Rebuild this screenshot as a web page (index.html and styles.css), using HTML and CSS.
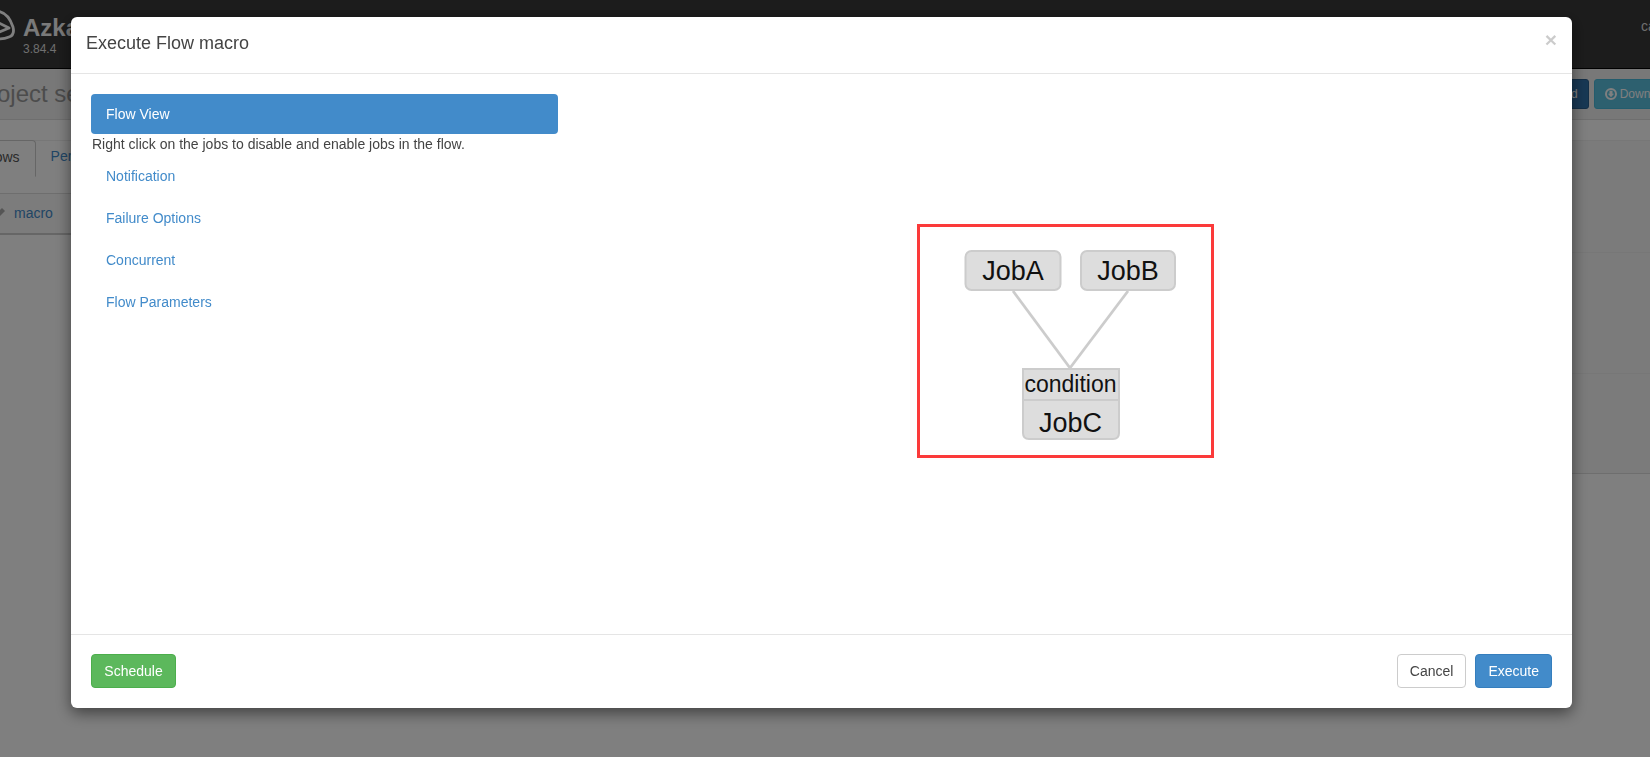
FILE: index.html
```html
<!DOCTYPE html>
<html lang="en">
<head>
<meta charset="utf-8">
<title>Azkaban - Execute Flow</title>
<link rel="stylesheet" href="styles.css">
</head>
<body>
<div class="page">
  <header class="navbar">
    <div class="brand">
      <svg class="logo" width="16" height="40" viewBox="0 0 16 40"><path d="M-5 10 Q8 10 13 26 Q15 34 9 36 Q2 39 -6 37 M-3 21 L9 27 L-3 32" fill="none" stroke="#fff" stroke-width="2.8" stroke-linejoin="round"/></svg>
      <div class="brand-text">
        <div class="brand-name">Azkaban</div>
        <div class="brand-version">3.84.4</div>
      </div>
    </div>
    <div class="user">carl</div>
  </header>
  <section class="page-head">
    <h1 class="project">Project settings</h1>
    <div class="head-actions">
      <a class="btn-sm btn-upload">Upload</a>
      <a class="btn-sm btn-download">
        <svg width="12" height="12" viewBox="0 0 12 12"><circle cx="6" cy="6" r="5" fill="none" stroke="#fff" stroke-width="2"/><path d="M4.5 2.8h3v3h1.6L6 9.3 2.9 5.8h1.6z" fill="#fff"/></svg>
        Download
      </a>
    </div>
  </section>
  <div class="sub-bar"></div>
  <div class="main">
    <div class="main-left">
      <nav class="tabs">
        <a class="tab tab-active">Flows</a>
        <a class="tab">Permissions</a>
        <span class="tabs-rest"></span>
      </nav>
      <div class="flow-row">
        <svg width="12" height="12" viewBox="0 0 12 12"><path d="M0 12l1-4 7-7 3 3-7 7z" fill="#aaa"/></svg>
        <a class="flow-link">macro</a>
      </div>
    </div>
    <aside class="main-right">
      <div class="side-block side-a"></div>
      <div class="side-block side-b"></div>
      <div class="side-block side-c"></div>
    </aside>
  </div>
</div>
<div class="backdrop"></div>
<div class="modal">
  <div class="modal-header">
    <button class="close">×</button>
    <h4 class="modal-title">Execute Flow macro</h4>
  </div>
  <div class="modal-body">
    <div class="sidebar">
      <a class="pill pill-active">Flow View</a>
      <p class="hint">Right click on the jobs to disable and enable jobs in the flow.</p>
      <a class="pill">Notification</a>
      <a class="pill">Failure Options</a>
      <a class="pill">Concurrent</a>
      <a class="pill">Flow Parameters</a>
    </div>
    <div class="graph-panel">
      <svg class="graph" width="297" height="234" viewBox="0 0 297 234">
        <rect class="frame" x="1.5" y="1.5" width="294" height="231"/>
        <line class="edge" x1="96" y1="67" x2="153" y2="144"/>
        <line class="edge" x1="211" y1="67" x2="153" y2="144"/>
        <rect class="node" x="48.500" y="27" width="95" height="39" rx="6"/>
        <rect class="node" x="164" y="27" width="94" height="39" rx="6"/>
        <path class="node" d="M106 145H202V209Q202 215 196 215H112Q106 215 106 209Z"/>
        <rect class="node" x="106" y="145" width="96" height="31"/>
        <text class="label" x="96" y="56">JobA</text>
        <text class="label" x="211" y="56">JobB</text>
        <text class="label label-small" x="153.500" y="168">condition</text>
        <text class="label" x="153.500" y="208">JobC</text>
      </svg>
    </div>
  </div>
  <div class="modal-footer">
    <button class="btn btn-success">Schedule</button>
    <div class="footer-right">
      <button class="btn btn-default">Cancel</button>
      <button class="btn btn-primary">Execute</button>
    </div>
  </div>
</div>
</body>
</html>
```

FILE: styles.css
```css
* { box-sizing: border-box; }
html, body { margin: 0; height: 100%; overflow: hidden; }
body { font-family: "Liberation Sans", Arial, sans-serif; font-size: 14px; line-height: 20px; color: #333; background: #fff; }

.page { height: 757px; overflow: hidden; display: flex; flex-direction: column; }
.navbar { height: 69px; flex: none; background: #393939; border-bottom: 1px solid #000; display: flex; justify-content: space-between; overflow: hidden; }
.brand { display: flex; align-items: flex-start; }
.logo { margin-top: 1px; margin-right: 7px; }
.brand-name { font-size: 24px; font-weight: bold; line-height: 30px; margin-top: 13px; color: #f4f4f4; }
.brand-version { font-size: 12px; line-height: 16px; margin-top: -2px; color: #ddd; }
.user { margin-top: 16px; margin-right: -16px; color: #ddd; font-size: 14px; width: 25px; }

.page-head { height: 51px; flex: none; background: #f0f0f0; border-bottom: 1px solid #ddd; display: flex; justify-content: space-between; overflow: hidden; padding-top: 10px; }
.project { margin: 0 0 0 -27px; font-size: 24px; font-weight: normal; line-height: 30px; color: #999; white-space: nowrap; }
.head-actions { display: flex; gap: 5px; margin-right: -34px; }
.btn-sm { display: flex; align-items: center; gap: 3px; height: 30px; padding: 0 10px; border-radius: 3px; font-size: 12px; color: #fff; }
.btn-upload { background: #3071a9; border: 1px solid #285e8e; }
.btn-download { background: #5bc0de; border: 1px solid #46b8da; }

.sub-bar { height: 21px; flex: none; background: #fff; border-bottom: 1px solid #eee; }
.main { flex: 1; display: flex; background: #fff; }
.main-left { width: 1000px; margin-top: -1px; }
.tabs { display: flex; height: 37px; }
.tab { padding: 6px 15px; color: #428bca; height: 37px; line-height: 20px; }
.tab-active { margin-left: -33px; padding-left: 15px; color: #555; background: #fff; border: 1px solid #ccc; border-bottom-color: #fff; border-radius: 4px 4px 0 0; }
.tabs-rest { flex: 1; border-bottom: 1px solid #ccc; }
.flow-row { margin-top: 16px; height: 42px; border-top: 1px solid #ddd; border-bottom: 2px solid #ccc; display: flex; align-items: center; gap: 8px; padding-bottom: 1px; margin-left: -6px; color: #428bca; background: #f9f9f9; }
.main-right { flex: 1; display: flex; flex-direction: column; }
.side-block { background: #f6f6f6; border-bottom: 1px solid #eee; }
.side-a { height: 112px; }
.side-b { height: 121px; }
.side-c { height: 100px; border-bottom: 1px solid #ddd; }

.backdrop { position: fixed; inset: 0; background: #000; opacity: .5; }
.modal { position: fixed; left: 71px; top: 17px; width: 1501px; height: 691px; background: #fff; border-radius: 6px; box-shadow: 0 5px 15px rgba(0,0,0,.5); display: flex; flex-direction: column; }
.modal-header { flex: none; height: 57px; padding: 14px 15px 15px; border-bottom: 1px solid #e5e5e5; }
.modal-title { margin: 0; font-size: 18px; font-weight: 500; line-height: 25px; color: #444; }
.close { float: right; margin-top: -2px; padding: 0; background: none; border: 0; font: bold 21px/21px "Liberation Sans", Arial, sans-serif; color: #000; opacity: .2; }
.modal-body { flex: 1; padding: 20px; display: flex; }
.sidebar { width: 467px; flex: none; display: flex; flex-direction: column; }
.pill { display: block; height: 40px; padding: 10px 15px; color: #428bca; border-radius: 4px; margin-bottom: 2px; }
.pill-active { color: #fff; background: #428bca; margin-bottom: 0; }
.hint { margin: 0 0 2px 1px; color: #444; }
.graph-panel { flex: 1; padding: 130px 0 0 359px; }
.graph { display: block; }
.frame { fill: #fff; stroke: #fb3a3a; stroke-width: 3; }
.edge { stroke: #ccc; stroke-width: 2.8; }
.node { fill: #ddd; stroke: #ccc; stroke-width: 2; }
.label { font-family: "Liberation Sans", Arial, sans-serif; font-size: 27px; fill: #111; text-anchor: middle; }
.label-small { font-size: 23px; }
.modal-footer { flex: none; height: 74px; padding: 19px 20px 20px; border-top: 1px solid #e5e5e5; display: flex; justify-content: space-between; }
.footer-right { display: flex; gap: 9px; }
.btn { height: 34px; padding: 6px 12px; border: 1px solid transparent; border-radius: 4px; font: 14px/20px "Liberation Sans", Arial, sans-serif; }
.btn-success { min-width: 85px; color: #fff; background: #5cb85c; border-color: #4cae4c; }
.btn-default { color: #444; background: #fff; border-color: #ccc; }
.btn-primary { color: #fff; background: #428bca; border-color: #357ebd; }
```
